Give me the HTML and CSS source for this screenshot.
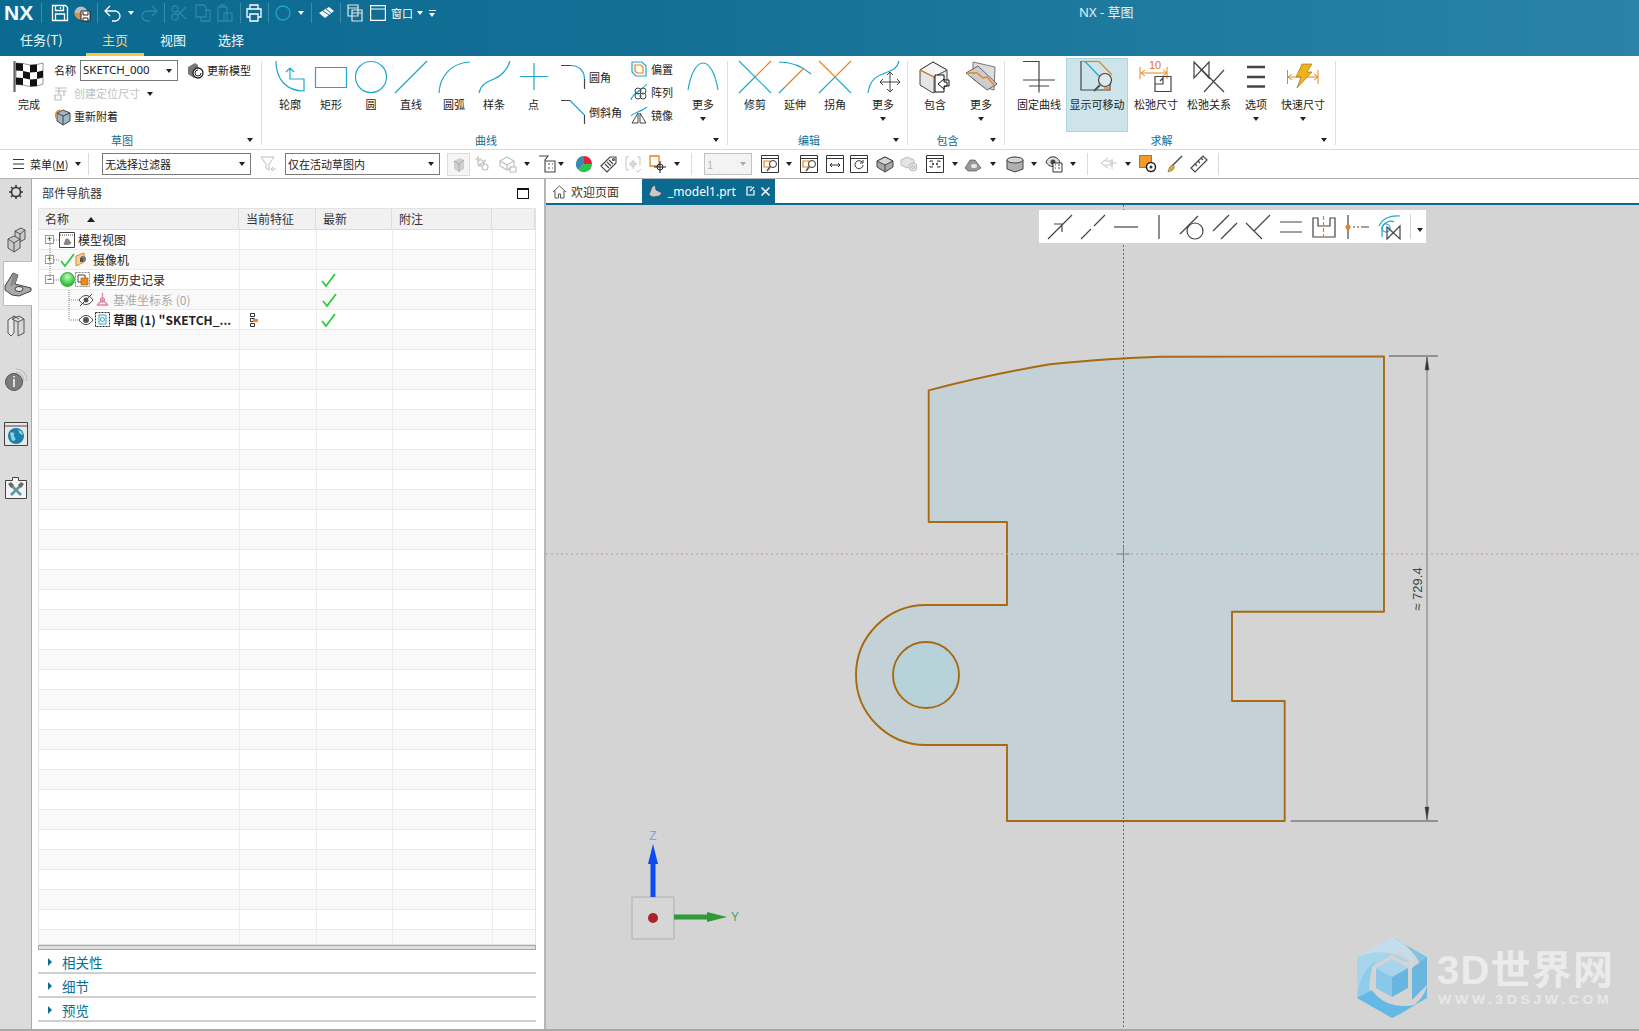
FILE: index.html
```html
<!DOCTYPE html>
<html lang="zh">
<head>
<meta charset="utf-8">
<title>NX - 草图</title>
<link rel="stylesheet" href="styles.css">
</head>
<body>
<div class="app">
  <header class="titlebar">
    <div class="qat">
      <span class="logo">NX</span><i class="qsep s1"></i>
      <svg class="q q51" width="18" height="18" viewBox="0 0 18 18" fill="none" stroke="#fff" stroke-width="1.3"><path d="M1.5 1.5h13l2 2v13h-15z"/><path d="M4.5 1.5v5h8v-5M4.5 16.5v-6.5h9v6.5M9.500 3v2"/></svg>
      <svg class="q q74" width="17" height="18" viewBox="0 0 17 18"><circle cx="7" cy="9" r="6.500" fill="#b9bcc0"/><path d="M1 9a6 6 0 0 0 6 6V9z" fill="#e98a2a"/><path d="M7 7h8l1 1v9H7z" fill="#fff" stroke="#222"/><path d="M9 8v3h5V8M9 17v-3h5v3" fill="none" stroke="#222"/></svg>
      <i class="qsep s2"></i>
      <svg class="q q103" width="17" height="18" viewBox="0 0 17 18" fill="none" stroke="#fff" stroke-width="1.3"><path d="M1 7h10a5 5 0 0 1 0 10H8M6 2 1 7l5 5"/></svg>
      <i class="qarrow a1"></i>
      <svg class="q q141" width="17" height="18" viewBox="0 0 17 18" fill="none" stroke="#2f86a8" stroke-width="1.3"><path d="M16 7H6a5 5 0 0 0 0 10h3M11 2l5 5-5 5"/></svg>
      <i class="qsep s3"></i>
      <svg class="q q170" width="16" height="18" viewBox="0 0 16 18" fill="none" stroke="#2f86a8" stroke-width="1.300"><circle cx="4" cy="13" r="3"/><circle cx="4" cy="5" r="3"/><path d="M7 11 15 3M7 7l8 8"/></svg>
      <svg class="q q194" width="16" height="18" viewBox="0 0 16 18" fill="none" stroke="#2f86a8" stroke-width="1.300"><path d="M1 1h8l2 2v10H1zM11 6h4v11H6v-4"/></svg>
      <svg class="q q216" width="16" height="18" viewBox="0 0 16 18" fill="none" stroke="#2f86a8" stroke-width="1.300"><path d="M1 3h9v14H1zM4 3V1h3v2M7 9h8v8H7z"/></svg>
      <i class="qsep s4"></i>
      <svg class="q q245" width="16" height="18" viewBox="0 0 16 18" fill="none" stroke="#fff" stroke-width="1.300"><path d="M4 5V1h8v4M4 13H1V5h14v8h-3M4 10h8v7H4z"/></svg>
      <i class="qsep s5"></i>
      <svg class="q q274" width="16" height="16" viewBox="0 0 16 16" fill="none" stroke="#1fa4cf" stroke-width="1.300"><circle cx="8" cy="8" r="7"/></svg>
      <i class="qarrow a2"></i>
      <i class="qsep s6"></i>
      <svg class="q q318" width="17" height="14" viewBox="0 0 17 14"><path d="M1 7 11 1l5 4-9 7z" fill="#fff"/><path d="M5 5l6 4M8 3l5 4" stroke="#0b6a90"/></svg>
      <i class="qsep s7"></i>
      <svg class="q q347" width="16" height="18" viewBox="0 0 16 18" fill="none" stroke="#e6e6e6" stroke-width="1.200"><path d="M1 1h10v11H1zM1 4h10M5 6h10v11H5zM5 9h10"/></svg>
      <svg class="q q370" width="16" height="16" viewBox="0 0 16 16" fill="none" stroke="#fff" stroke-width="1.200"><path d="M.6.6h14.800v14.800H.6zM.6 4h14.800"/></svg>
      <span class="qwin">窗口</span>
      <i class="qarrow a3"></i>
      <span class="qmore"></span>
      <span class="apptitle">NX - 草图</span>
    </div>
    <nav class="tabs">
      <span class="tab t1">任务(T)</span>
      <span class="tab t2 active">主页</span>
      <span class="tab t3">视图</span>
      <span class="tab t4">选择</span>
    </nav>
  </header>

  <section class="ribbon">
    <div class="group g-sketch">
      <div class="body">
        <div class="tool w50 m4">
          <svg width="32" height="32" viewBox="0 0 32 32"><path d="M1.500 0v31" stroke="#666" stroke-width="2.200"/><path d="M3 2 10 2.500 17 4 24 3.500 30 2V23L24 25 17 25.500 10 24 3 23.500Z" fill="#fff" stroke="#333" stroke-width=".5"/><path d="M3 2 10 2.500V10L3 9.500ZM17 4 24 3.500V11L17 11.500ZM10 10 17 11.500V18.500L10 17ZM24 11 30 9.500V16.500L24 18ZM3 16.500 10 17V24L3 23.500ZM17 18.500 24 18V25L17 25.500Z" fill="#111"/></svg>
          <span class="lbl">完成</span>
        </div>
        <div class="sketchcol">
          <div class="srow r1">
            <span class="txt nm">名称</span>
            <span class="select s-name">SKETCH_000<i class="drop"></i></span>
            <svg class="upd" width="18" height="17" viewBox="0 0 18 17"><path d="M1 5l7-4 3 2v10l-4 3-6-4z" fill="#777"/><circle cx="11" cy="11" r="5" fill="#fff" stroke="#222" stroke-width="1.300"/><path d="M11 8a3 3 0 1 0 3 3" fill="none" stroke="#222"/></svg>
            <span class="txt">更新模型</span>
          </div>
          <div class="srow r2">
            <svg width="14" height="14" viewBox="0 0 14 14" fill="none" stroke="#bdbdbd" stroke-width="1.200"><path d="M1 1h12M1 4h12M5 1v6M10 4v5M1 8h6v5H1z"/></svg>
            <span class="txt off t7">创建定位尺寸</span>
            <i class="drop d-pos"></i>
          </div>
          <div class="srow r3">
            <svg width="17" height="17" viewBox="0 0 17 17"><path d="M9 2l7 3v8l-7 4-6-4V5z" fill="#9fb8c4" stroke="#444"/><path d="M3 5l6 3 7-3M9 8v9" stroke="#444" fill="none"/><path d="M6 2C2 3 1 6 2 10" fill="none" stroke="#e8821e" stroke-width="1.400"/></svg>
            <span class="txt t3px">重新附着</span>
          </div>
        </div>
      </div>
      <div class="foot"><span class="gl">草图</span><i class="drop"></i></div>
    </div>

    <div class="group g-curve">
      <div class="body">
        <div class="tool w40"><svg width="32" height="32" viewBox="0 0 32 32" class="cy"><path d="M2 0C2 18 12 30 30 30V18H16V7M12 11l4-4 4 4"/></svg><span class="lbl">轮廓</span></div>
        <div class="tool w42"><svg width="32" height="32" viewBox="0 0 32 32" class="cy"><path d="M.5 6.500h31v20H.5z"/></svg><span class="lbl">矩形</span></div>
        <div class="tool w38"><svg width="32" height="32" viewBox="0 0 32 32" class="cy"><circle cx="16" cy="16" r="15.500"/></svg><span class="lbl">圆</span></div>
        <div class="tool w42"><svg width="32" height="32" viewBox="0 0 32 32" class="cy"><path d="M0 32 32 0"/></svg><span class="lbl">直线</span></div>
        <div class="tool w44"><svg width="32" height="32" viewBox="0 0 32 32" class="cy"><path d="M1 32C2 14 14 2 32 1"/></svg><span class="lbl">圆弧</span></div>
        <div class="tool w36"><svg width="32" height="32" viewBox="0 0 32 32" class="cy"><path d="M1 32c2-9 8-11 15-14S29 10 32 0"/></svg><span class="lbl">样条</span></div>
        <div class="tool w43"><svg width="32" height="32" viewBox="0 0 32 32" class="cy"><path d="M16 2v27M2 15.500h28"/></svg><span class="lbl">点</span></div>
        <div class="smcol w72">
          <div class="smrow"><svg width="24" height="24" viewBox="0 0 24 24" fill="none"><path d="M0 .5h10M23.500 14v10" stroke="#444" stroke-width="1.200"/><path d="M10 .5C18 .5 23.500 6 23.500 14" stroke="#1ea7cf" stroke-width="1.200"/></svg><span class="txt">圆角</span></div>
          <div class="smrow"><svg width="24" height="24" viewBox="0 0 24 24" fill="none"><path d="M0 .5h9M23.500 15v9" stroke="#444" stroke-width="1.200"/><path d="M9 .5 23.500 15" stroke="#1ea7cf" stroke-width="1.200"/></svg><span class="txt">倒斜角</span></div>
        </div>
        <div class="xscol w56">
          <div class="xsrow"><svg width="16" height="16" viewBox="0 0 16 16" fill="none"><path d="M1 1h10l4 4v10H5l-4-4z" stroke="#1ea7cf" stroke-width="1.200"/><path d="M4 4h6l2 2v6H6L4 10z" stroke="#e8821e" stroke-width="1.200"/></svg><span class="txt">偏置</span></div>
          <div class="xsrow"><svg width="16" height="16" viewBox="0 0 16 16" fill="none"><path d="M0 16C1 9 9 8 16 0" stroke="#1ea7cf" stroke-width="1.100"/><g stroke="#444"><circle cx="7" cy="12" r="3"/><circle cx="12" cy="12" r="3"/><circle cx="7" cy="7" r="3"/><circle cx="12" cy="7" r="3"/></g></svg><span class="txt">阵列</span></div>
          <div class="xsrow"><svg width="16" height="16" viewBox="0 0 16 16" fill="none"><path d="M0 9C2 6 8 6 16 0" stroke="#1ea7cf" stroke-width="1.100"/><path d="M1 16 7 6v10zM9 6l6 10H9z" stroke="#444"/></svg><span class="txt">镜像</span></div>
        </div>
        <div class="tool w40"><svg width="32" height="32" viewBox="0 0 32 32" class="cy"><path d="M1 29C7-7 25-7 31 29"/></svg><span class="lbl">更多</span><i class="drop"></i></div>
      </div>
      <div class="foot"><span class="gl">曲线</span><i class="drop"></i></div>
    </div>

    <div class="group g-edit">
      <div class="body">
        <div class="tool w40"><svg width="32" height="32" viewBox="0 0 32 32" class="cy"><path d="M0 32 16 16M0 0l32 32"/><path class="or" d="M16 16 32 0"/></svg><span class="lbl">修剪</span></div>
        <div class="tool w40"><svg width="32" height="32" viewBox="0 0 32 32" class="cy"><path d="M0 1c12 0 23 4 32 12M0 32l6-6"/><path class="or" d="M6 26 25 7"/></svg><span class="lbl">延伸</span></div>
        <div class="tool w40"><svg width="32" height="32" viewBox="0 0 32 32" class="cy"><path d="M0 32 16 16l16 16"/><path class="or" d="M0 0l16 16L32 0"/></svg><span class="lbl">拐角</span></div>
        <div class="tool w48 m4"><svg width="32" height="32" viewBox="0 0 32 32" class="cy"><path d="M1 32C3 18 10 15 18 12S30 8 32 0"/><path class="dk" d="M23 11v20M13 21h20M20 14l3-3 3 3M20 28l3 3 3-3M16 18l-3 3 3 3M30 18l3 3-3 3"/></svg><span class="lbl">更多</span><i class="drop"></i></div>
      </div>
      <div class="foot"><span class="gl">编辑</span><i class="drop"></i></div>
    </div>

    <div class="group g-incl">
      <div class="body">
        <div class="tool w40 p7"><svg width="32" height="32" viewBox="0 0 32 32"><path d="M1 9l13-8 14 8v15l-14 8-13-8z" fill="#e6e6e6" stroke="#444"/><path d="M1 9l14 7 13-7-14-8z" fill="#f5f5f5" stroke="#444"/><path d="M15 16v16" stroke="#666"/><path d="M1 9l14 7" stroke="#e8821e" stroke-width="1.300"/><path d="M16 14h9v5h5v6h-5v6h-9z" fill="#fff" stroke="#111"/><path d="M25 18l-6 5 6 5v-3h3v-4h-3z" fill="#fff" stroke="#111"/></svg><span class="lbl">包含</span></div>
        <div class="tool w40 m6"><svg width="32" height="32" viewBox="0 0 32 32"><path d="M8 1l22 5-1 23-10-3-11-8z" fill="#dcdcdc" stroke="#777"/><path d="M1 12l12-7 19 18-10 6z" fill="#cacaca" fill-opacity=".85" stroke="#666"/><path d="M3 12h9l6 5 4-1 7 8" fill="none" stroke="#e8821e" stroke-width="1.300"/></svg><span class="lbl">更多</span><i class="drop"></i></div>
      </div>
      <div class="foot"><span class="gl">包含</span><i class="drop"></i></div>
    </div>

    <div class="group g-solve">
      <div class="body">
        <div class="tool w48 p10"><svg width="32" height="32" viewBox="0 0 32 32" fill="none" stroke="#444" stroke-width="1.200"><path d="M0 .5h16v31M0 19h32M6 25h20"/></svg><span class="lbl">固定曲线</span></div>
        <div class="tool w62 m3 on"><svg width="32" height="32" viewBox="0 0 32 32" fill="none"><path d="M0 0v29h29V15" stroke="#444" stroke-width="1.200"/><path d="M1 .5h17" stroke="#e8821e" stroke-width="1.200"/><path d="M18 .5 31 14" stroke="#e8821e" stroke-width="1.200"/><path d="M4 .5 20 17" stroke="#1ea7cf" stroke-width="1.200"/><path d="M23 27h7" stroke="#e8821e" stroke-width="1.400"/><circle cx="24" cy="19" r="6.500" fill="#dfe9ec" stroke="#444" stroke-width="1.200"/><path d="M19 24l-6 6" stroke="#555" stroke-width="2.200"/></svg><span class="lbl">显示可移动</span></div>
        <div class="tool w52 m2"><svg width="32" height="32" viewBox="0 0 32 32" fill="none"><text x="9" y="8" class="ten">10</text><path d="M0 6v12M27 6v12M1 12h26M5 9l-4 3 4 3M23 9l4 3-4 3" stroke="#e8821e"/><path d="M15 15.500h16v15H15zM15 23h8v-8M20 20l3-3h0" stroke="#444" stroke-width="1.200"/></svg><span class="lbl">松弛尺寸</span></div>
        <div class="tool w52 m1"><svg width="32" height="32" viewBox="0 0 32 32" fill="none" stroke="#444" stroke-width="1.200"><path d="M1 1v16l15-16v16zM1 1l30 30M31 9 11 31"/></svg><span class="lbl">松弛关系</span></div>
        <div class="tool w40 m1"><svg width="32" height="32" viewBox="0 0 32 32"><path d="M7 6h18M7 16h18M7 25.500h18" stroke="#444" stroke-width="2.400"/></svg><span class="lbl">选项</span><i class="drop"></i></div>
        <div class="tool w48 m3"><svg width="32" height="32" viewBox="0 0 32 32"><path d="M.5 9v14M31 9v14M1 16h30M5 13l-4 3 4 3M27 13l4 3-4 3" stroke="#e8821e" fill="none"/><path d="M15 3h10l-5 8h5L10 27l4-11H9z" fill="#f1b11c" stroke="#8a6a12" stroke-width=".6"/></svg><span class="lbl">快速尺寸</span><i class="drop"></i></div>
      </div>
      <div class="foot"><span class="gl">求解</span><i class="drop"></i></div>
    </div>
  </section>

  <section class="toolbar">
    <svg class="burger" width="11" height="10" viewBox="0 0 11 10"><path d="M0 .5h11M0 5h11M0 9.500h11" stroke="#333"/></svg>
    <span class="txt menu">菜单(<u>M</u>)</span>
    <i class="drop d78"></i>
    <i class="tsep ts89"></i>
    <span class="select s1w">无选择过滤器<i class="drop"></i></span>
    <svg class="ic m10x" viewBox="0 0 18 18" width="18" height="18" fill="none" stroke="#bdbdbd"><path d="M1 2h13l-5 7v6l-3-2V9zM11 14h5M13 12l-2 2 2 2"/></svg>
    <span class="select s2w">仅在活动草图内<i class="drop"></i></span>

    <span class="ic on m7"><svg width="16" height="16" viewBox="0 0 16 16"><path d="M3 5l6-3 4 2v9l-5 3-5-3z" fill="#cfcfcf"/><path d="M3 5l5 3 5-4M8 8v8" stroke="#aaa" fill="none"/></svg></span>
    <svg class="ic m3" width="18" height="18" viewBox="0 0 18 18" fill="none" stroke="#c0c0c0" stroke-width="1.200"><path d="M2 4h6M5 1v6M5 11l8-6"/><circle cx="12" cy="12" r="3"/><circle cx="8" cy="8" r="3"/></svg>
    <svg class="ic m8" width="18" height="18" viewBox="0 0 18 18" fill="none" stroke="#c0c0c0" stroke-width="1.200"><path d="M1 6l7-4 7 4v5l-7 4-7-4zM1 6l7 4 7-4M8 10v5M11 12h6v5h-6z"/></svg>
    <i class="drop m5 ar"></i>
    <svg class="ic m7" width="18" height="18" viewBox="0 0 18 18" fill="none" stroke="#444" stroke-width="1.100"><path d="M1 1h9l-3 4v12M7 6h10v11H7zM10 9h2M14 9h1M10 13h2M14 13h1"/></svg>
    <i class="drop ar"></i>
    <svg class="ic m10" width="18" height="18" viewBox="0 0 18 18"><path d="M9 9V1a8 8 0 0 1 8 8z" fill="#e21f3d"/><path d="M9 9h8a8 8 0 0 1-13.700 5.700z" fill="#2ec24e"/><path d="M9 9 3.300 14.700A8 8 0 0 1 9 1z" fill="#3a8cad"/></svg>
    <svg class="ic m7" width="18" height="18" viewBox="0 0 18 18" fill="none" stroke="#444" stroke-width="1.100"><path d="M1 11 10 2h6v6l-9 9zM5 9l4 4M7 7l4 4M9 5l4 4"/><circle cx="13.500" cy="4.500" r="1"/></svg>
    <svg class="ic m6" width="18" height="18" viewBox="0 0 18 18" fill="none" stroke="#c4c4c4"><path d="M5 2H2v13h3M13 2h3v8M9 5v9M5 9h8M12 15l2 2 3-3"/><circle cx="9" cy="9" r="2.500"/></svg>
    <svg class="ic m7" width="18" height="18" viewBox="0 0 18 18" fill="none"><path d="M1 1h9v10H1z" stroke="#e8821e" stroke-width="1.300"/><circle cx="11" cy="12" r="3" stroke="#222"/><path d="M11 6v12M5 12h12" stroke="#222"/></svg>
    <i class="drop m5 ar"></i>
    <i class="tsep m10"></i>
    <span class="select s3w off2">1<i class="drop"></i></span>

    <svg class="ic m9" width="18" height="18" viewBox="0 0 18 18"><use href="#win"/><path d="M3 6h6v6H3z" fill="none" stroke="#e8821e" stroke-width="1.200"/><circle cx="12" cy="9" r="3.500" fill="#fff" stroke="#333"/><path d="M9 12l-3 4" stroke="#555" stroke-width="1.600"/></svg>
    <i class="drop m5 ar"></i>
    <svg class="ic m7" width="18" height="18" viewBox="0 0 18 18"><use href="#win"/><path d="M3 6h6v6H3z" fill="none" stroke="#e8821e" stroke-width="1.200"/><circle cx="12" cy="9" r="3.500" fill="#fff" stroke="#333"/><path d="M9 12l-3 4" stroke="#555" stroke-width="1.600"/></svg>
    <svg class="ic m8" width="18" height="18" viewBox="0 0 18 18"><use href="#win"/><path d="M4 10h10M6 8l-2 2 2 2M12 8l2 2-2 2" fill="none" stroke="#333"/></svg>
    <svg class="ic m6" width="18" height="18" viewBox="0 0 18 18"><use href="#win"/><path d="M12 7a4 4 0 1 0 1 3M13 5v3h-3" fill="none" stroke="#333"/></svg>
    <svg class="ic m8" width="18" height="18" viewBox="0 0 18 18"><path d="M1 6l8-4 8 4v6l-8 5-8-5z" fill="#a8a8a8" stroke="#444"/><path d="M1 6l8 4 8-4-8-4z" fill="#d6d6d6" stroke="#444"/><path d="M9 10v7" stroke="#444"/></svg>
    <svg class="ic m6" width="18" height="18" viewBox="0 0 18 18" fill="#e4e4e4" stroke="#bcbcbc"><path d="M1 5l6-3 7 3v5l-7 3-6-3z"/><circle cx="13" cy="12" r="4"/><circle cx="13" cy="12" r="1.500"/></svg>
    <svg class="ic m8" width="18" height="18" viewBox="0 0 18 18"><use href="#win"/><path d="M4 7V6h3M14 7V6h-3M4 11v1h3M14 11v1h-3M6 8l2 1-2 1M12 8l-2 1 2 1" fill="none" stroke="#333"/></svg>
    <i class="drop m6 ar"></i>
    <svg class="ic m5" width="18" height="18" viewBox="0 0 18 18"><path d="M1 13 6 5h5l6 8-5 3H4z" fill="#999" stroke="#444" stroke-width=".6"/><ellipse cx="10" cy="11" rx="3" ry="2" fill="#e8e8e8"/></svg>
    <i class="drop m6 ar"></i>
    <svg class="ic m9" width="18" height="18" viewBox="0 0 18 18"><path d="M1 5l8-3 8 3v9l-8 3-8-3z" fill="#b0b0b0" stroke="#444"/><ellipse cx="9" cy="5" rx="8" ry="3" fill="#d6d6d6" stroke="#444"/></svg>
    <i class="drop m5 ar"></i>
    <svg class="ic m7" width="18" height="18" viewBox="0 0 18 18"><path d="M1 7c3-7 11-7 14 0-3 6-11 6-14 0z" fill="#ddd" stroke="#333"/><circle cx="8" cy="7" r="2.500" fill="#444"/><path d="M8 8h9v9H8z" fill="#fff" stroke="#333"/><path d="M10 10h1M13 10h2M10 13h1M13 13h2" stroke="#444"/></svg>
    <i class="drop m5 ar"></i>
    <i class="tsep m10"></i>
    <svg class="ic m12" width="18" height="18" viewBox="0 0 18 18" fill="none" stroke="#c4c4c4"><path d="M8 3 1 8l7 5M5 6h8M5 10h8M12 4v10M9 8h8"/></svg>
    <i class="drop m5 ar"></i>
    <svg class="ic m7" width="18" height="18" viewBox="0 0 18 18"><path d="M.5.5h12v12H.5z" fill="#f39a2a" stroke="#c76a12"/><circle cx="12" cy="12" r="4.500" fill="#fff" stroke="#222" stroke-width="1.500"/><circle cx="12" cy="12" r="1.500" fill="#333"/></svg>
    <svg class="ic m8" width="18" height="18" viewBox="0 0 18 18"><path d="M17 1 7 11" stroke="#555" stroke-width="1.600"/><path d="M8 10c-3 0-4 3-5 7 4-1 7-3 6-6z" fill="#d8a83c" stroke="#7a6a2a" stroke-width=".6"/></svg>
    <svg class="ic m7" width="18" height="18" viewBox="0 0 18 18" fill="#fff" stroke="#444" stroke-width="1.200"><path d="M1 13 13 1l4 4L5 17zM5 9l2 2M8 6l2 2M11 3l2 2"/></svg>
    <i class="tsep m10"></i>
  </section>

  <main class="main">
    <aside class="sidebar">
      <div class="si si-gear"><svg width="16" height="16" viewBox="0 0 16 16" fill="none" stroke="#333" stroke-width="1.600"><circle cx="8" cy="8" r="4.500"/><path d="M8 1v2M8 13v2M1 8h2M13 8h2M3 3l1.500 1.500M13 3l-1.500 1.500M3 13l1.500-1.500M13 13l-1.500-1.500"/></svg></div>
      <div class="si si-cube"><svg width="18" height="24" viewBox="0 0 18 24" stroke="#555" fill="#c9c9c9"><path d="M8 3l6-3 4 2v9l-5 3-5-3z"/><path d="M8 3l5 3 5-4M13 6v8" fill="none"/><path d="M1 11l6-3 6 3v9l-6 4-6-4z"/><path d="M1 11l6 4 6-4M7 15v9" fill="none"/></svg></div>
      <div class="si si-act"><svg width="28" height="24" viewBox="0 0 28 24"><path d="M1 14 9 1l5 2-3 9 16 4v3l-12 5-7-1-7-5z" fill="#a8a8a8" stroke="#444"/><path d="M9 1l5 2-3 9-5 3z" fill="#8b8b8b"/><ellipse cx="15" cy="17" rx="4" ry="2.500" fill="#e8e8e8" stroke="#444"/></svg></div>
      <div class="si si-book"><svg width="18" height="22" viewBox="0 0 18 22" fill="#e8e8e8" stroke="#555"><path d="M1 5l6-4v17l-3 3-3-3z"/><path d="M5 4l7-3 5 3v14l-6 3V7z" fill="#d8d8d8"/><path d="M11 7l6-3M7 1l5 3"/></svg></div>
      <div class="si gap si-info"><svg width="24" height="24" viewBox="0 0 24 24"><path d="M12 1c6 0 11 5 11 12M12 4c4 0 8 4 8 9" fill="none" stroke="#bbb" stroke-width="1.200"/><circle cx="10" cy="14" r="8.500" fill="#7c7c7c" stroke="#555"/><path d="M10 8v1.500M10 11v8" stroke="#fff" stroke-width="1.500"/></svg></div>
      <div class="si gap si-web"><svg width="24" height="24" viewBox="0 0 24 24"><path d="M.5.5h23v23H.5z" fill="#e8e8e8" stroke="#444"/><path d="M1 4h22" stroke="#444"/><circle cx="12" cy="14" r="8" fill="#1b7fa6"/><path d="M6 11c3-2 5 0 4 2s3 3 1 5-3 1-4-2zM14 8c3 0 5 3 5 5l-3-1z" fill="#8fd0e0"/></svg></div>
      <div class="si gap si-tool"><svg width="22" height="22" viewBox="0 0 22 22"><path d="M.5 3.500h7V.5h6v3h8v18H.5z" fill="#f4f4f4" stroke="#444"/><path d="M7 9l9 9M15 9l-9 9" stroke="#5c9a9c" stroke-width="2.600"/><path d="M3 7l3-2 3 3-3 3zM19 7l-3-2-3 3 3 3z" fill="#6a6a6a"/></svg></div>
    </aside>

    <section class="panel">
      <div class="panel-head">
        <span class="txt12">部件导航器</span>
        <span class="maxbtn"></span>
      </div>
      <div class="table">
        <div class="thead">
          <span class="th c1">名称<i class="up"></i></span>
          <span class="th c2">当前特征</span>
          <span class="th c3">最新</span>
          <span class="th c4">附注</span>
          <span class="th c5"></span>
        </div>
        <div class="rows">
          <svg class="treelines" width="60" height="100" viewBox="0 0 60 100" fill="none" stroke="#888" stroke-dasharray="1 1"><path d="M11 10v40M15 10h6M15 30h6M15 50h6M30 60v30M30 70h10M30 90h10"/></svg>
          <div class="row"><span class="box">+</span><svg class="n1" width="16" height="16" viewBox="0 0 16 16"><use href="#win2"/><path d="M5 12l2-5h2l3 4-2 1.500H6z" fill="#888" stroke="#555" stroke-width=".5"/></svg><span class="rt">模型视图</span></div>
          <div class="row"><span class="box">+</span><svg class="chk" width="15" height="14" viewBox="0 0 15 14" fill="none"><path d="M1 8l4 5 9-12" stroke="#2fcc3f" stroke-width="1.800"/></svg><svg class="n2" width="15" height="15" viewBox="0 0 15 15"><path d="M1 4l8-3v9l-8 4z" fill="#f7d2a0" stroke="#e8821e"/><circle cx="8" cy="7" r="3" fill="#777"/><path d="M5 6h3v4H5z" fill="#555"/></svg><span class="rt">摄像机</span></div>
          <div class="row"><span class="box">−</span><span class="ball"></span><svg class="n2" width="15" height="15" viewBox="0 0 15 15"><path d="M.5.5h14v14H.5z" fill="#fff" stroke="#888" stroke-dasharray="2 1"/><path d="M3 3h7v7H3z" fill="#fff" stroke="#444"/><path d="M6 6h7v7H6z" fill="#f08c1e" stroke="#a85c10" stroke-width=".7"/></svg><span class="rt">模型历史记录</span><svg class="ok" width="15" height="14" viewBox="0 0 15 14" fill="none"><path d="M1 8l4 5 9-12" stroke="#2fcc3f" stroke-width="1.800"/></svg></div>
          <div class="row"><svg class="eye" width="16" height="14" viewBox="0 0 16 14"><path d="M1 7c4-6 10-6 14 0-4 6-10 6-14 0z" fill="#fff" stroke="#444"/><circle cx="8" cy="7" r="2.500" fill="#555"/><path d="M2 13 14 1" stroke="#444"/></svg><svg class="n3" width="15" height="15" viewBox="0 0 15 15" fill="none" stroke="#e0889c" stroke-width="1.300"><path d="M7.500 1v7M7.500 8 2 13M7.500 8 13 13M2 13h11"/><circle cx="7.500" cy="8" r="2"/></svg><span class="rt grey">基准坐标系 (0)</span><svg class="ok o2" width="15" height="14" viewBox="0 0 15 14" fill="none"><path d="M1 8l4 5 9-12" stroke="#2fcc3f" stroke-width="1.800"/></svg></div>
          <div class="row"><svg class="eye" width="16" height="14" viewBox="0 0 16 14"><path d="M1 7c4-6 10-6 14 0-4 6-10 6-14 0z" fill="#fff" stroke="#444"/><circle cx="8" cy="7" r="3" fill="#555"/></svg><svg class="n3" width="15" height="15" viewBox="0 0 15 15" fill="none"><path d="M.5.5h14v14H.5z" stroke="#222" stroke-dasharray="2 1"/><path d="M4 3v9h7V3z" stroke="#1ea7cf"/><circle cx="7.500" cy="7.500" r="2" stroke="#1ea7cf"/></svg><span class="rt bold">草图 (1) "SKETCH_...</span><svg class="feat" width="8" height="14" viewBox="0 0 8 14" fill="none" stroke="#333"><path d="M.5.5h4v3h-4zM.5 5.500h4v3h-4zM.5 10.500h4v3h-4z"/><path d="M3 6h5v3H3z" fill="#f08c1e" stroke="none"/></svg><svg class="ok o3" width="15" height="14" viewBox="0 0 15 14" fill="none"><path d="M1 8l4 5 9-12" stroke="#2fcc3f" stroke-width="1.800"/></svg></div>
          <div class="row"></div><div class="row"></div><div class="row"></div><div class="row"></div><div class="row"></div>
          <div class="row"></div><div class="row"></div><div class="row"></div><div class="row"></div><div class="row"></div>
          <div class="row"></div><div class="row"></div><div class="row"></div><div class="row"></div><div class="row"></div>
          <div class="row"></div><div class="row"></div><div class="row"></div><div class="row"></div><div class="row"></div>
          <div class="row"></div><div class="row"></div><div class="row"></div><div class="row"></div><div class="row"></div>
          <div class="row"></div><div class="row"></div><div class="row"></div><div class="row"></div><div class="row"></div>
          <div class="row"></div>
        </div>
      </div>
      <div class="hscroll"></div>
      <div class="acc"><i class="tri"></i>相关性</div>
      <div class="acc"><i class="tri"></i>细节</div>
      <div class="acc"><i class="tri"></i>预览</div>
    </section>

    <section class="work">
      <div class="doctabs">
        <span class="dt dt-home"><svg width="15" height="15" viewBox="0 0 15 15" fill="none" stroke="#555"><path d="M1 8l6.500-6L14 8M3 7v7h3.500v-4h2v4H12V7"/></svg>欢迎页面</span>
        <span class="dt dt-active"><svg width="15" height="14" viewBox="0 0 15 14"><path d="M1 11 4 3l3-2 1 5 6 3-3 3-6 1z" fill="#c9c9c9" stroke="#333" stroke-width=".5"/></svg><span class="dtname">_model1.prt</span><svg class="dtbtn" width="9" height="10" viewBox="0 0 9 10" fill="none" stroke="#fff" stroke-width="1.200"><path d="M6 1H1v8h7V4M4 5l4-4"/></svg><svg class="dtx" width="9" height="9" viewBox="0 0 9 9" stroke="#fff" stroke-width="1.500"><path d="M.5.5l8 8M8.500.5l-8 8"/></svg></span>
      </div>
      <div class="viewport">
        <svg class="canvas" width="1093" height="823" viewBox="546 205 1093 823">
          <path class="shape" fill-rule="evenodd" d="M928.700 390.300Q992 374 1050 364.300 1113 358 1160 356.700L1384 356.500V611.700H1232V701H1284.700V821H1007V745H926A70 70 0 0 1 926 605H1007V522H928.700Z"/>
          <circle class="hole" cx="926" cy="675" r="33"/>
          <path class="datum-v" d="M1123.500 205V1028"/>
          <path class="datum-h" d="M546 554H1639"/>
          <path class="cross" d="M1117 554H1130M1123.500 547V561"/>
          <path class="ext" d="M1389 356H1438M1290.700 821H1438"/>
          <path class="dimline" d="M1427 356V821"/>
          <path class="dimhead" d="M1425 370 1427 357 1429 370ZM1425 807 1427 820 1429 807Z"/>
          <text class="dimtxt" transform="rotate(-90 1418 589)" x="1418" y="593">≈ 729.4</text>

          <rect class="tbox" x="632" y="897" width="42" height="42" rx="1"/>
          <path d="M653 897V864" stroke="#0b4cf0" stroke-width="5"/>
          <path d="M653 844 648 864H658Z" fill="#0b4cf0"/>
          <circle cx="653" cy="918" r="5" fill="#ab2326"/>
          <path d="M674 917H707" stroke="#2e9a38" stroke-width="5"/>
          <path d="M727 917 707 912V922Z" fill="#2e9a38"/>
          <text class="axz" x="653" y="840">Z</text>
          <text class="axy" x="735" y="921">Y</text>

          <g class="mark">
            <path fill="#c3deec" d="M1392 937 1357 957 1374 957C1392 946 1408 950 1412 968 1415 960 1410 945 1392 937Z"/>
            <path fill="#7cc3e6" d="M1392 937 1427 957V985C1424 965 1412 945 1392 937Z"/>
            <path fill="#a7d5ec" d="M1357 957V998C1358 975 1372 955 1410 962 1395 950 1372 950 1357 957Z"/>
            <path fill="#8fcbea" d="M1357 998 1372 1006C1368 990 1368 975 1376 960 1366 968 1358 980 1357 998Z"/>
            <path fill="#6ebce4" d="M1427 985V998L1392 1018C1410 1010 1424 1000 1427 985Z"/>
            <path fill="#62b9e6" d="M1372 990 1357 998 1392 1018 1415 1005C1400 1008 1382 1005 1372 990Z"/>
            <path fill="#6ab6de" d="M1412 968V1000L1427 985V957Z"/>
            <path fill="#d4d4d4" d="M1392 955 1412 967V991L1392 1003 1372 991V967Z"/>
            <path fill="#a9d4ec" d="M1392 959 1408 968 1392 977 1376 968Z"/>
            <path fill="#8ac8ea" d="M1376 968 1392 977V997L1376 988Z"/>
            <path fill="#67b6e0" d="M1408 968V988L1392 997V977Z"/>
          </g>
          <text class="wm" x="1437" y="984" textLength="176" lengthAdjust="spacing">3D世界网</text>
          <text class="wm2" x="1438" y="1004" textLength="174" lengthAdjust="spacingAndGlyphs">WWW.3DSJW.COM</text>
        </svg>

        <div class="floatbar">
          <svg width="24" height="24" viewBox="0 0 24 24"><path d="M0 24 24 0M6 9h8v8" /></svg>
          <svg width="24" height="24" viewBox="0 0 24 24"><path d="M0 24 10 14M13 11 24 0"/></svg>
          <svg width="24" height="24" viewBox="0 0 24 24"><path d="M0 12H24"/></svg>
          <svg width="24" height="24" viewBox="0 0 24 24"><path d="M12 0V24"/></svg>
          <svg width="24" height="24" viewBox="0 0 24 24"><path d="M0 19 18 1"/><circle cx="15" cy="16" r="8"/></svg>
          <svg width="24" height="24" viewBox="0 0 24 24"><path d="M0 16 16 0M8 24 24 8"/></svg>
          <svg width="24" height="24" viewBox="0 0 24 24"><path d="M0 8 16 24M8 16 24 0"/></svg>
          <svg width="24" height="24" viewBox="0 0 24 24"><path d="M1 7H23M1 17H23"/></svg>
          <svg width="24" height="24" viewBox="0 0 24 24"><path d="M1 3V22H23V3H18V11H6V3Z"/><path class="or" d="M11.500 1V24" stroke-dasharray="4 2"/></svg>
          <svg width="24" height="24" viewBox="0 0 24 24"><path d="M3 0V24"/><path d="M8 12h2M12 12h2M16 12h8"/><circle cx="3" cy="12" r="2.500" fill="#e8821e" stroke="none"/></svg>
          <svg width="24" height="24" viewBox="0 0 24 24"><path class="cyline" d="M1 11C4 4 12 0 22 1M4 22V13C6 7 12 5 16 7"/><circle class="cyline" cx="8" cy="13" r="4"/><path d="M9 12 22 24V11L9 24Z"/></svg>
          <i class="fbsep"></i>
          <i class="drop fbdrop"></i>
        </div>
      </div>
    </section>
  </main>
</div>

<svg class="defs" width="0" height="0">
  <symbol id="win" viewBox="0 0 18 18"><path d="M.5.5h17v17H.5z" fill="#fff" stroke="#333"/><path d="M1 3.500h16" stroke="#333"/></symbol>
  <symbol id="win2" viewBox="0 0 16 16"><path d="M.5.5h15v15H.5z" fill="#fff" stroke="#444"/><path d="M1 3h14" stroke="#444" stroke-dasharray="1 1"/></symbol>
</svg>
</body>
</html>
```

FILE: styles.css
```css
* { box-sizing: border-box; }
html, body { margin: 0; padding: 0; background: #fff; }
body { font-family: "Noto Sans CJK SC", "Noto Sans", sans-serif; font-size: 11px; color: #222; }
i { display: block; font-style: normal; }
svg { display: block; flex: none; overflow: visible; }
.defs { position: absolute; }
.app { width: 1639px; height: 1031px; display: flex; flex-direction: column; overflow: hidden; }

/* title bar */
.titlebar { height: 56px; background: linear-gradient(90deg, #0a6a90 0%, #146f95 40%, #1f7a9f 70%, #2a82a8 100%); color: #fff; flex: none; }
.qat { height: 26px; display: flex; align-items: center; margin-bottom: 4px; }
.logo { font-family: "Liberation Sans", sans-serif; font-weight: 700; font-size: 21px; line-height: 26px; width: 37px; margin-left: 4px; letter-spacing: 0; color: #f4fbff; }
.qsep { width: 1px; height: 20px; background: #3e8caa; }
.s1 { margin-left: 0; }
.q51 { margin-left: 9px; }
.q74 { margin-left: 5px; }
.s2 { margin-left: 6px; }
.q103 { margin-left: 6px; }
.qarrow { width: 0; height: 0; border: 3.500px solid transparent; border-top: 4px solid #fff; border-bottom: 0; }
.a1 { margin-left: 7px; }
.q141 { margin-left: 7px; }
.s3 { margin-left: 6px; }
.q170 { margin-left: 6px; }
.q194 { margin-left: 8px; }
.q216 { margin-left: 6px; }
.s4 { margin-left: 7px; }
.q245 { margin-left: 5px; }
.s5 { margin-left: 6px; }
.q274 { margin-left: 6px; }
.a2 { margin-left: 7px; }
.s6 { margin-left: 7px; }
.q318 { margin-left: 6px; }
.s7 { margin-left: 5px; }
.q347 { margin-left: 6px; }
.q370 { margin-left: 7px; }
.qwin { margin-left: 5px; font-size: 11px; width: 22px; white-space: nowrap; line-height: 16px; }
.a3 { margin-left: 4px; }
.qmore { margin-left: 6px; width: 7px; height: 6px; border-top: 1px solid #fff; position: relative; }
.qmore::after { content: ""; position: absolute; left: 0; top: 2px; border: 3.500px solid transparent; border-top: 4px solid #fff; border-bottom: 0; }
.apptitle { margin-left: 643px; font-size: 13px; line-height: 18px; margin-top: -2px; font-family: "Noto Sans", "Noto Sans CJK SC", sans-serif; color: #e4f1f6; white-space: nowrap; }
.tabs { height: 26px; display: flex; }
.tab { font-size: 13px; line-height: 20px; color: #f2f8fb; white-space: nowrap; }
.t1 { margin-left: 20px; width: 66px; }
.t2 { width: 58px; text-align: center; color: #f7d36a; border-bottom: 3px solid #f6c744; height: 26px; }
.t3 { margin-left: 16px; width: 58px; }

/* ribbon */
.ribbon { height: 94px; border-bottom: 1px solid #d9d9d9; background: #fff; display: flex; padding-top: 5px; flex: none; }
.group { height: 84px; border-right: 1px solid #dedede; display: flex; flex-direction: column; flex: none; }
.g-sketch { width: 262px; }
.g-curve { width: 466px; }
.g-edit { width: 180px; }
.g-incl { width: 97px; }
.g-solve { width: 331px; }
.body { height: 70px; display: flex; }
.g-curve .body { padding-left: 8px; }
.g-edit .body { padding-left: 7px; }
.foot { height: 14px; display: flex; }
.gl { flex: 1; text-align: center; color: #0b6e96; font-size: 11px; line-height: 18px; }
.foot .drop { margin: 7px 8px 0 3px; }
.drop { width: 0; height: 0; border-left: 3.500px solid transparent; border-right: 3.500px solid transparent; border-top: 4px solid #222; flex: none; }
.tool { display: flex; flex-direction: column; align-items: center; flex: none; }
.lbl { margin-top: 3px; font-size: 11px; line-height: 16px; white-space: nowrap; color: #222; }
.tool .drop { margin-top: 5px; }
.w36 { width: 36px; } .w38 { width: 38px; } .w40 { width: 40px; } .w42 { width: 42px; }
.w43 { width: 43px; } .w44 { width: 44px; } .w48 { width: 48px; } .w50 { width: 50px; }
.w52 { width: 52px; } .w56 { width: 56px; } .w62 { width: 62px; } .w72 { width: 72px; }
.tool.on { height: 74px; margin-top: -3px; padding-top: 2px; background: #cce4ea; border: 1px solid #a9d4e0; }
.p7 { margin-left: 7px; }
.p10 { margin-left: 10px; }
.m1 { margin-left: 1px; } .m2 { margin-left: 2px; } .m3 { margin-left: 3px; } .m4 { margin-left: 4px; }
.m5 { margin-left: 5px; } .m6 { margin-left: 6px; } .m7 { margin-left: 7px; } .m8 { margin-left: 8px; }
.m9 { margin-left: 9px; } .m10 { margin-left: 10px; } .m12 { margin-left: 12px; }
.cy { fill: none; stroke: #1ea7cf; stroke-width: 1.200px; }
.cy .or { stroke: #e8821e; }
.cy .dk { stroke: #444; stroke-width: 1px; }
.ten { font: 11px "Liberation Sans", sans-serif; fill: #d9781a; stroke: none; }
.txt { font-size: 11px; line-height: 16px; white-space: nowrap; color: #222; }
.off { color: #bfbfbf; }
.sketchcol { width: 207px; display: flex; flex-direction: column; margin-top: -1px; }
.srow { display: flex; align-items: center; height: 23px; }
.srow .txt { padding-bottom: 2px; }
.r1 { height: 21px; margin-bottom: 1px; }
.nm { width: 26px; }
.select { display: flex; align-items: center; justify-content: space-between; border: 1px solid #7a7a7a; background: #fff; padding: 0 5px 0 2px; height: 22px; flex: none; font-size: 11px; color: #222; white-space: nowrap; }
.s-name { width: 98px; height: 21px; font-size: 11.500px; font-family: "Noto Sans", sans-serif; line-height: 17px; padding-bottom: 2px; }
.s-name .drop { margin-top: 2px; }
.upd { margin: 0 2px 0 9px; }
.t7 { margin-left: 6px; }
.d-pos { margin-left: 7px; }
.r3 .txt { margin-left: 3px; }
.smcol { padding: 4px 0 0 6px; display: flex; flex-direction: column; gap: 11px; }
.smrow { display: flex; align-items: center; gap: 4px; height: 24px; }
.xscol { padding-left: 4px; display: flex; flex-direction: column; gap: 7px; }
.xsrow { display: flex; align-items: center; gap: 4px; height: 16px; }

/* second toolbar */
.toolbar { height: 29px; border-bottom: 1px solid #b0b0b0; display: flex; align-items: center; flex: none; background: #fff; }
.burger { margin-left: 13px; }
.menu { margin-left: 6px; width: 44px; }
.d78 { margin-left: 1px; }
.tsep { width: 1px; height: 22px; background: #dcdcdc; flex: none; }
.ts89 { margin-left: 7px; }
.s1w { width: 149px; margin-left: 13px; }
.m10x { margin-left: 9px; }
.s2w { width: 155px; margin-left: 7px; }
.s3w { width: 48px; margin-left: 12px; border: 1px solid #c2c2c2; background: #f3f3f3; color: #b5b5b5; }
.off2 .drop { border-top-color: #aaa; }
.ic { width: 18px; height: 18px; flex: none; }
.ic.on { width: 23px; height: 23px; background: #f5f5f5; border: 1px solid #ddd; display: flex; align-items: center; justify-content: center; }
.ar { margin-left: 1.500px; margin-right: 1.500px; }
.ar.m5 { margin-left: 6.500px; }
.ar.m6 { margin-left: 7.500px; }

/* main */
.main { flex: 1; display: flex; min-height: 0; border-bottom: 2px solid #a8a8a8; }
.sidebar { width: 32px; background: #dcdcdc; border-right: 1px solid #a9a9a9; flex: none; display: flex; flex-direction: column; align-items: center; }
.si { height: 40px; display: flex; align-items: center; justify-content: center; width: 100%; }
.si-gear { align-items: flex-start; padding-top: 5px; }
.si-cube { height: 42px; }
.si-act { height: 45px; background: #fff; margin-left: 3px; width: 29px; margin-right: -1px; border: 1px solid #bdbdbd; border-right: 0; }
.gap { margin-top: 14px; }

.panel { width: 514px; flex: none; background: #fff; border-right: 2px solid #b5b5b5; display: flex; flex-direction: column; }
.panel-head { height: 29px; display: flex; align-items: center; justify-content: space-between; padding: 0 15px 2px 10px; flex: none; }
.txt12 { font-size: 12px; color: #333; }
.maxbtn { width: 12px; height: 11px; border: 1px solid #111; border-top-width: 2px; margin-top: 2px; }
.table { margin-left: 6px; width: 498px; height: 737px; border: 1px solid #e3e3e3; flex: none; overflow: hidden; display: flex; flex-direction: column; }
.thead { height: 21px; display: grid; grid-template-columns: 200px 77px 76px 100px 1fr; background: #f1f1f1; border-bottom: 1px solid #dcdcdc; flex: none; }
.th { font-size: 12px; line-height: 20px; color: #333; padding-left: 7px; border-right: 1px solid #dcdcdc; display: flex; align-items: center; }
.th.c1 { padding-left: 6px; }
.up { width: 0; height: 0; border: 4px solid transparent; border-bottom: 5px solid #222; border-top: 0; margin-left: 18px; }
.rows { flex: 1; position: relative; overflow: hidden; }
.treelines { position: absolute; left: 0; top: 0; z-index: 1; }
.row { height: 20px; display: flex; align-items: center; border-bottom: 1px solid #eaeaea;
  background-image: linear-gradient(#ececec, #ececec), linear-gradient(#ececec, #ececec), linear-gradient(#ececec, #ececec), linear-gradient(#ececec, #ececec);
  background-size: 1px 100%; background-repeat: no-repeat; background-position: 200px 0, 277px 0, 353px 0, 453px 0; }
.row:nth-child(odd) { background-color: #f9f9f9; }
.box { width: 9px; height: 9px; border: 1px solid #9a9a9a; background: #fff; font: 9px/7px "Liberation Sans", sans-serif; color: #222; text-align: center; margin-left: 6px; flex: none; }
.n1 { margin-left: 5px; }
.chk { margin-left: 6px; }
.n2 { margin-left: 0; }
.ball { width: 15px; height: 15px; border-radius: 50%; margin-left: 6px; flex: none; background: radial-gradient(circle at 50% 30%, #c9f7c6 0, #46d24c 55%, #1c9d2a 100%); border: 1px solid #3b9c43; }
.rt { font-size: 12px; line-height: 18px; margin-left: 3px; white-space: nowrap; color: #222; }
.grey { color: #a9a9a9; }
.bold { font-weight: 700; font-size: 12px; width: 130px; }
.eye { margin-left: 39px; }
.n3 { margin-left: 1px; }
.feat { margin-left: 7px; }
.ok { margin-left: 156px; }
.o2 { margin-left: 132px; }
.o3 { margin-left: 63px; }
.hscroll { margin-left: 6px; width: 498px; height: 5px; background: #dedede; border: 1px solid #a8a8a8; flex: none; }
.acc { margin-left: 6px; width: 498px; height: 24px; border-bottom: 2px solid #cfcfcf; color: #0b6e96; font-size: 13.500px; line-height: 22px; display: flex; align-items: center; flex: none; padding: 2px 0 0 10px; }
.tri { width: 0; height: 0; border: 4px solid transparent; border-left: 4.500px solid #0b6e96; border-right: 0; margin-right: 10px; }

.work { flex: 1; min-width: 0; display: flex; flex-direction: column; }
.doctabs { height: 26px; border-bottom: 2px solid #0b6a8f; display: flex; background: #fff; flex: none; padding-left: 6px; }
.dt { display: flex; align-items: center; font-size: 12px; white-space: nowrap; color: #333; height: 24px; }
.dt-home { width: 90px; gap: 4px; }
.dt-active { width: 133px; background: #0b6a8f; color: #fff; padding-left: 6px; font-family: "Noto Sans", sans-serif; }
.dtname { margin-left: 5px; font-size: 12px; width: 72px; }
.dtbtn { margin-left: 6px; }
.dtx { margin-left: 6px; }
.viewport { flex: 1; background: #d4d4d4; position: relative; overflow: hidden; }
.canvas { position: absolute; left: 0; top: 0; }
.shape { fill: #c4d2d7; stroke: #a86a10; stroke-width: 1.900px; stroke-linejoin: round; }
.hole { fill: #b8d2da; stroke: #a86a10; stroke-width: 1.900px; }
.datum-v { stroke: #5d7653; stroke-width: 1px; stroke-dasharray: 2 2; }
.datum-h { stroke: #c98f93; stroke-width: 1px; stroke-dasharray: 2 3; }
.cross { stroke: #7487ad; stroke-width: 1px; }
.ext { stroke: #7b7b7b; stroke-width: 1.300px; }
.dimline { stroke: #9a9a9a; stroke-width: 1.600px; }
.dimhead { fill: #333; stroke: #555; stroke-width: .5px; }
.dimtxt { font: 13px "Liberation Sans", sans-serif; fill: #444; text-anchor: middle; }
.tbox { fill: #d6d6d6; stroke: #bcbcbc; stroke-width: 1.500px; }
.axz { font: 12px "Liberation Sans", sans-serif; fill: #8a9aee; text-anchor: middle; }
.axy { font: 12px "Liberation Sans", sans-serif; fill: #4f9f58; text-anchor: middle; }
.wm { font-family: "Liberation Sans", "Noto Sans CJK SC", sans-serif; font-weight: 700; font-size: 40px; fill: #ebebeb; }
.wm2 { font-family: "Liberation Sans", sans-serif; font-size: 12px; font-weight: 700; letter-spacing: 3px; fill: #e8e8e8; }
.floatbar { position: absolute; left: 493px; top: 5px; width: 387px; height: 33px; background: #fff; display: flex; align-items: center; gap: 9px; padding-left: 9px; }
.floatbar svg { fill: none; stroke: #444; stroke-width: 1.200px; }
.floatbar .or { stroke: #e8821e; }
.floatbar .cyline { stroke: #1ea7cf; }
.fbsep { width: 1px; height: 25px; background: #d0d0d0; margin-left: -1px; flex: none; }
.fbdrop { margin-left: -3px; margin-top: 7px; }
```
